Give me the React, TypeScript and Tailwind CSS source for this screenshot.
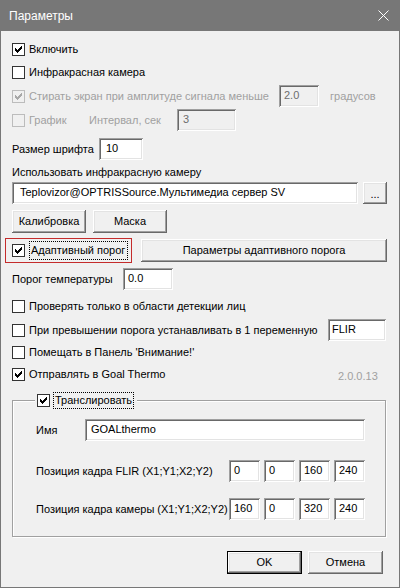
import React from "react";

const CHECK_COLS = [2, 3, 4, 3, 2, 1, 0];

function Check({ checked = false, disabled = false }: { checked?: boolean; disabled?: boolean }) {
  return (
    <span
      className={
        disabled
          ? "flex h-[13px] w-[13px] shrink-0 items-center justify-center border border-[#bcbcbc] bg-[#f0f0f0]"
          : "flex h-[13px] w-[13px] shrink-0 items-center justify-center border border-[#333333] bg-white"
      }
    >
      {checked && (
        <svg width="11" height="11" viewBox="0 0 11 11" shapeRendering="crispEdges">
          {CHECK_COLS.map((dy, i) => (
            <rect
              key={i}
              x={2 + i}
              y={2 + dy}
              width="1"
              height="3"
              fill={disabled ? "#a8a8a8" : "#000000"}
            />
          ))}
        </svg>
      )}
    </span>
  );
}

function Field({
  value,
  className,
  disabled = false,
}: {
  value: string;
  className: string;
  disabled?: boolean;
}) {
  return (
    <div
      className={
        (disabled
          ? "bg-[#f0f0f0] text-[#6d6d6d] "
          : "bg-white text-black ") +
        "flex h-[22px] shrink-0 items-center pb-[1px] shadow-[inset_1px_1px_0_#a0a0a0,inset_-1px_-1px_0_#ffffff,inset_2px_2px_0_#696969,inset_-2px_-2px_0_#e3e3e3] " +
        className
      }
    >
      {value}
    </div>
  );
}

function Btn({
  label,
  className,
  isDefault = false,
}: {
  label: string;
  className: string;
  isDefault?: boolean;
}) {
  if (isDefault) {
    return (
      <div className={"flex shrink-0 border border-black bg-[#f0f0f0] " + className}>
        <div className="flex flex-1 items-center justify-center shadow-[inset_-1px_-1px_0_#696969,inset_1px_1px_0_#ffffff,inset_-2px_-2px_0_#a0a0a0,inset_2px_2px_0_#e3e3e3]">
          {label}
        </div>
      </div>
    );
  }
  return (
    <div
      className={
        "flex shrink-0 items-center justify-center bg-[#f0f0f0] shadow-[inset_-1px_-1px_0_#696969,inset_1px_1px_0_#ffffff,inset_-2px_-2px_0_#a0a0a0,inset_2px_2px_0_#e3e3e3] " +
        className
      }
    >
      {label}
    </div>
  );
}

export default function App() {
  return (
    <div className="flex h-[588px] w-[400px] flex-col overflow-hidden border border-[#777777] bg-[#f0f0f0] font-['Liberation_Sans',Arial,sans-serif] text-[11px] leading-[13px] text-black">
      {/* Title bar */}
      <div className="flex h-[30px] shrink-0 items-center justify-between bg-[#777777] pl-[8px] pr-[10px]">
        <span className="text-[12px] leading-[14px] text-white">Параметры</span>
        <svg width="11" height="11" viewBox="0 0 11 11" className="-mt-[1px]">
          <path d="M0.5 0.5 L10.5 10.5 M10.5 0.5 L0.5 10.5" stroke="#ffffff" strokeWidth="1" />
        </svg>
      </div>

      {/* Content */}
      <div className="flex flex-col pl-[11px] pt-[8px]">
        <div className="flex h-[21px] items-center">
          <Check checked />
          <span className="ml-[4px]">Включить</span>
        </div>

        <div className="mt-[2px] flex h-[21px] items-center">
          <Check />
          <span className="ml-[4px]">Инфракрасная камера</span>
        </div>

        <div className="mt-[2px] flex h-[22px] items-center">
          <Check checked disabled />
          <span className="ml-[4px] w-[250px] text-[#a0a0a0]">
            Стирать экран при амплитуде сигнала меньше
          </span>
          <Field value="2.0" disabled className="w-[40px] pl-[5px]" />
          <span className="ml-[11px] text-[#a0a0a0]">градусов</span>
        </div>

        <div className="mt-[2px] flex h-[22px] items-center">
          <Check disabled />
          <span className="ml-[4px] w-[60px] text-[#a0a0a0]">График</span>
          <span className="w-[88px] text-[#a0a0a0]">Интервал, сек</span>
          <Field value="3" disabled className="w-[59px] pl-[6px]" />
        </div>

        <div className="mt-[7px] flex h-[22px] items-center">
          <span className="w-[87px]">Размер шрифта</span>
          <Field value="10" className="w-[44px] pl-[7px]" />
        </div>

        <div className="mt-[6px] flex h-[13px] items-center">
          <span>Использовать инфракрасную камеру</span>
        </div>

        <div className="mt-[3px] flex h-[22px] items-center">
          <Field
            value="Teplovizor@OPTRISSource.Мультимедиа сервер SV"
            className="w-[346px] pl-[8px]"
          />
          <Btn label="..." className="ml-[5px] h-[22px] w-[24px] pt-[3px]" />
        </div>

        <div className="mt-[6px] flex h-[23px] items-center gap-[7px]">
          <Btn label="Калибровка" className="h-[23px] w-[74px]" />
          <Btn label="Маска" className="h-[23px] w-[74px]" />
        </div>

        <div className="relative mt-[6px] flex h-[23px] items-center">
          <div className="absolute -left-[7px] -top-[1px] h-[25px] w-[127px] border border-[#c42b2b]" />
          <Check checked />
          <span className="ml-[4px] flex h-[19px] w-[99px] items-center border border-dotted border-black pl-[1px]">
            Адаптивный порог
          </span>
          <Btn label="Параметры адаптивного порога" className="ml-[13px] h-[23px] w-[246px]" />
        </div>

        <div className="mt-[6px] flex h-[22px] items-center">
          <span className="w-[111px]">Порог температуры</span>
          <Field value="0.0" className="w-[50px] pl-[5px]" />
        </div>

        <div className="mt-[6px] flex h-[21px] items-center">
          <Check />
          <span className="ml-[4px]">Проверять только в области детекции лиц</span>
        </div>

        <div className="mt-[2px] flex h-[22px] items-center">
          <Check />
          <span className="ml-[4px] w-[299px]">
            При превышении порога устанавливать в 1 переменную
          </span>
          <Field value="FLIR" className="w-[58px] pl-[4px]" />
        </div>

        <div className="mt-[1px] flex h-[21px] items-center">
          <Check />
          <span className="ml-[4px]">Помещать в Панель 'Внимание!'</span>
        </div>

        <div className="mt-[1px] flex h-[21px] items-center">
          <Check checked />
          <span className="ml-[4px] w-[309px]">Отправлять в Goal Thermo</span>
          <span className="mt-[3px] text-[#a0a0a0]">2.0.0.13</span>
        </div>

        {/* Group box */}
        <div className="relative mt-[15px] flex h-[137px] w-[374px] flex-col border border-[#a0a0a0] pl-[23px] pt-[18px] shadow-[inset_1px_1px_0_#ffffff,1px_1px_0_#ffffff]">
          <div className="absolute -top-[9px] left-[22px] flex h-[17px] items-center bg-[#f0f0f0] pl-[2px] pr-[3px]">
            <Check checked />
            <span className="ml-[3px] flex h-[17px] w-[81px] items-center border border-dotted border-black pl-[1px]">
              Транслировать
            </span>
          </div>

          <div className="flex h-[22px] items-center">
            <span className="w-[49px]">Имя</span>
            <Field value="GOALthermo" className="w-[280px] pl-[6px]" />
          </div>

          <div className="mt-[19px] flex h-[22px] items-center">
            <span className="w-[193px]">Позиция кадра FLIR (X1;Y1;X2;Y2)</span>
            <div className="flex gap-[4px]">
              <Field value="0" className="w-[31px] pl-[5px]" />
              <Field value="0" className="w-[31px] pl-[5px]" />
              <Field value="160" className="w-[31px] pl-[5px]" />
              <Field value="240" className="w-[31px] pl-[5px]" />
            </div>
          </div>

          <div className="mt-[16px] flex h-[22px] items-center">
            <span className="w-[193px]">Позиция кадра камеры (X1;Y1;X2;Y2)</span>
            <div className="flex gap-[4px]">
              <Field value="160" className="w-[31px] pl-[5px]" />
              <Field value="0" className="w-[31px] pl-[5px]" />
              <Field value="320" className="w-[31px] pl-[5px]" />
              <Field value="240" className="w-[31px] pl-[5px]" />
            </div>
          </div>
        </div>

        {/* Bottom buttons */}
        <div className="mt-[14px] flex h-[23px] justify-end gap-[6px] pr-[16px]">
          <Btn label="OK" isDefault className="h-[23px] w-[75px]" />
          <Btn label="Отмена" className="h-[23px] w-[75px]" />
        </div>
      </div>
    </div>
  );
}
